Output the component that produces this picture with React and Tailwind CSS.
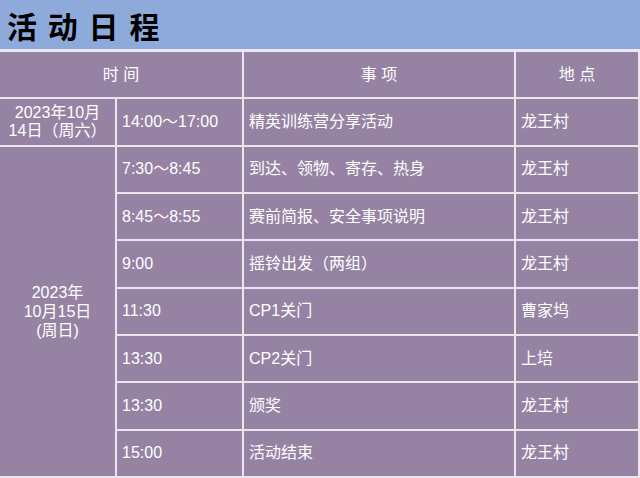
import React from "react";

const rows = [
  { time: "7:30～8:45", item: "到达、领物、寄存、热身", place: "龙王村" },
  { time: "8:45～8:55", item: "赛前简报、安全事项说明", place: "龙王村" },
  { time: "9:00", item: "摇铃出发（两组）", place: "龙王村" },
  { time: "11:30", item: "CP1关门", place: "曹家坞" },
  { time: "13:30", item: "CP2关门", place: "上培" },
  { time: "13:30", item: "颁奖", place: "龙王村" },
  { time: "15:00", item: "活动结束", place: "龙王村" },
];

const cell = "bg-[#9683a3] flex items-center text-white text-[16px]";

export default function App() {
  return (
    <div
      className="w-[640px] h-[478px] flex flex-col bg-white overflow-hidden"
      style={{ fontFamily: '"Liberation Sans", "Noto Sans CJK SC", sans-serif' }}
    >
      {/* Title bar */}
      <div className="h-[49px] shrink-0 bg-[#8eaadb] flex items-center pl-[7px]">
        <h1
          className="text-[30px] font-bold text-black leading-none tracking-[2px]"
          style={{ fontFamily: '"Noto Sans CJK SC", sans-serif' }}
        >
          活 动 日 程
        </h1>
      </div>

      {/* Schedule table */}
      <div className="flex-1 bg-[#ebe5f0] pt-[3px] pb-[2px] pr-[2px] grid grid-cols-[115px_125px_270px_1fr] grid-rows-9 gap-[2px]">
        <div className={`${cell} col-span-2 justify-center`}>时 间</div>
        <div className={`${cell} justify-center`}>事 项</div>
        <div className={`${cell} justify-center`}>地 点</div>

        <div className={`${cell} justify-center text-center leading-[18px]`}>
          2023年10月
          <br />
          14日（周六）
        </div>
        <div className={`${cell} pl-[5px]`}>14:00～17:00</div>
        <div className={`${cell} pl-[5px]`}>精英训练营分享活动</div>
        <div className={`${cell} pl-[5px]`}>龙王村</div>

        <div className={`${cell} row-span-7 justify-center text-center leading-[19px]`}>
          2023年
          <br />
          10月15日
          <br />
          (周日)
        </div>
        {rows.map((r, i) => (
          <React.Fragment key={i}>
            <div className={`${cell} pl-[5px]`}>{r.time}</div>
            <div className={`${cell} pl-[5px]`}>{r.item}</div>
            <div className={`${cell} pl-[5px]`}>{r.place}</div>
          </React.Fragment>
        ))}
      </div>
    </div>
  );
}
